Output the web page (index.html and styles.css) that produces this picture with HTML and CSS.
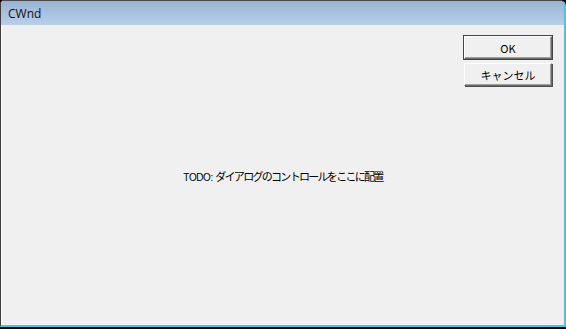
FILE: index.html
```html
<!DOCTYPE html>
<html lang="ja">
<head>
<meta charset="utf-8">
<link rel="stylesheet" href="styles.css">
</head>
<body>
<div class="window">
  <div class="titlebar"><span class="title">CWnd</span></div>
  <div class="client">
    <div class="buttons">
      <button class="btn btn-default">OK</button>
      <button class="btn">キャンセル</button>
    </div>
    <div class="message"><span class="latin">TODO: </span><span class="cjk">ダイアログのコントロールをここに配置</span></div>
  </div>
</div>
<div class="taskbar"></div>
</body>
</html>
```

FILE: styles.css
```css
html, body {
  margin: 0;
  padding: 0;
  width: 566px;
  height: 329px;
  overflow: hidden;
  background: #000;
}
.window {
  width: 566px;
  height: 327px;
  display: flex;
  flex-direction: column;
  box-sizing: border-box;
  border-left: 1px solid #3b3b3b;
  border-top: 1px solid #4a4a4a;
  border-right: 2px solid #3fc8ea;
  border-bottom: 2px solid #3fc8ea;
  border-top-left-radius: 4px;
  border-top-right-radius: 6px;
  background: #f0f0f0;
  overflow: hidden;
}
.titlebar {
  height: 24px;
  flex: none;
  background: linear-gradient(to bottom, #98b4d3, #b8cfe8);
  display: flex;
  align-items: center;
  padding-left: 7px;
}
.title {
  font-family: "Open Sans", "Noto Sans", sans-serif;
  font-size: 12px;
  color: #111;
}
.client {
  flex: 1;
  position: relative;
  border-left: 1px solid #fff;
  background: #f0f0f0;
  display: flex;
  align-items: center;
  justify-content: center;
  padding-top: 1px;
}
.buttons {
  position: absolute;
  top: 11px;
  right: 12px;
  display: flex;
  flex-direction: column;
  gap: 4px;
}
.btn {
  width: 88px;
  height: 23px;
  box-sizing: border-box;
  background: #f0f0f0;
  border: 1px solid;
  border-color: #fff #6a6a6a #6a6a6a #fff;
  box-shadow: inset -1px -1px 0 #a0a0a0, 1px 1px 0 #505050;
  font-family: "Noto Sans CJK JP", sans-serif;
  font-size: 11px;
  color: #000;
  padding: 0;
}
.btn-default {
  outline: 1px solid #444;
}
.message {
  color: #000;
  white-space: nowrap;
}
.latin {
  font-family: "Liberation Sans", sans-serif;
  font-size: 10px;
  letter-spacing: -0.4px;
}
.cjk {
  font-family: "Noto Sans CJK JP", sans-serif;
  font-size: 11px;
  letter-spacing: -1.7px;
}
.taskbar {
  height: 2px;
  background: #000;
}
```
